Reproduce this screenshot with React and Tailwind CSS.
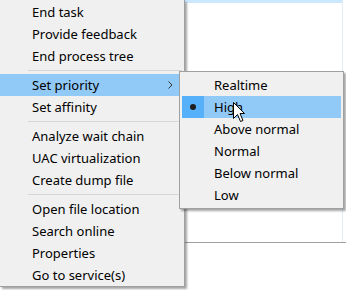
const mainGroups = [
  ['End task', 'Provide feedback', 'End process tree'],
  ['Set priority', 'Set affinity'],
  ['Analyze wait chain', 'UAC virtualization', 'Create dump file'],
  ['Open file location', 'Search online', 'Properties', 'Go to service(s)'],
];

const priorities = ['Realtime', 'High', 'Above normal', 'Normal', 'Below normal', 'Low'];

function Chevron() {
  return (
    <svg width="5" height="8" viewBox="0 0 5 8" className="ml-auto mr-[9px]">
      <path d="M0.5 0.5 L4 4 L0.5 7.5" fill="none" stroke="#333" strokeWidth="1" />
    </svg>
  );
}

function Cursor() {
  return (
    <svg width="13" height="21" viewBox="0 0 13 21" className="absolute left-[233px] top-[102px]">
      <path
        d="M0.5 0.5 L0.5 16.5 L4.5 12.5 L7.5 19.5 L10 18.5 L7 11.5 L11.5 11.5 Z"
        fill="#fff"
        stroke="#000"
        strokeWidth="1"
      />
    </svg>
  );
}

export default function App() {
  return (
    <div className="relative h-[290px] w-[346px] overflow-hidden bg-white font-['Segoe_UI','Noto_Sans',sans-serif] text-[13px] text-black">
      {/* background list behind the menus */}
      <div className="pl-[185px]">
        <div className="h-[243px] border-b border-[#a0a0a0]">
          <div className="mr-[3px] h-full border-r border-[#e3edf7]">
            <div className="h-[3px] bg-[#cce8ff]" />
          </div>
        </div>
      </div>

      {/* main context menu */}
      <div className="absolute left-0 top-0 w-[185px] border-b border-r border-[#a0a0a0] bg-[#f0f0f0] pt-px shadow-[2px_2px_2px_rgba(0,0,0,0.35)]">
        {mainGroups.map((group, gi) => (
          <div key={gi}>
            {gi > 0 && (
              <div className="flex h-[7px] items-center pl-[28px] pr-[2px]">
                <div className="h-px w-full bg-[#d7d7d7]" />
              </div>
            )}
            {group.map((label) => {
              const active = label === 'Set priority';
              return (
                <div
                  key={label}
                  className={`mr-[2px] flex h-[22px] items-center pl-[32px] leading-none ${
                    active ? 'bg-[#91c9f7]' : ''
                  }`}
                >
                  {label}
                  {active && <Chevron />}
                </div>
              );
            })}
          </div>
        ))}
      </div>

      {/* priority submenu */}
      <div className="absolute left-[179px] top-[71px] w-[165px] border border-[#a0a0a0] bg-[#f0f0f0] p-[2px] shadow-[2px_2px_2px_rgba(0,0,0,0.35)]">
        {priorities.map((label) => {
          const active = label === 'High';
          return (
            <div
              key={label}
              className={`flex h-[22px] items-center leading-none ${active ? 'bg-[#91c9f7]' : ''}`}
            >
              <div
                className={`flex h-full w-[22px] items-center justify-center ${
                  active ? 'bg-[#56b0fa]' : ''
                }`}
              >
                {active && <div className="h-[6px] w-[6px] rounded-full bg-[#1e1e1e]" />}
              </div>
              <span className="pl-[10px]">{label}</span>
            </div>
          );
        })}
      </div>

      <Cursor />
    </div>
  );
}
